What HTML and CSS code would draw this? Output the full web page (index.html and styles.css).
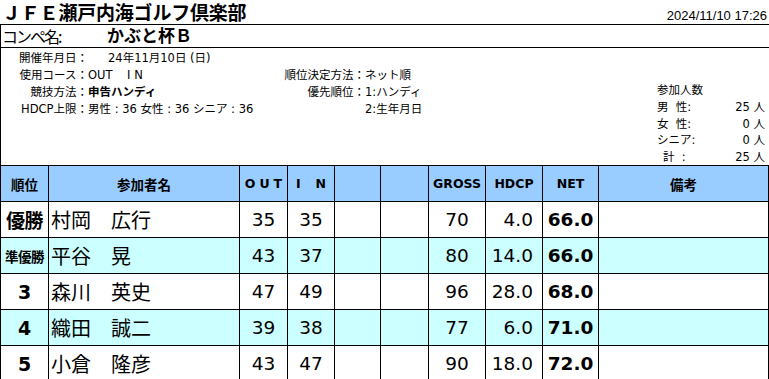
FILE: index.html
```html
<!DOCTYPE html>
<html lang="ja">
<head>
<meta charset="utf-8">
<title>ＪＦＥ瀬戸内海ゴルフ倶楽部 成績表</title>
<link rel="stylesheet" href="styles.css">
</head>
<body>
<div class="page">
  <header class="title-row">
    <h1 class="club">ＪＦＥ瀬戸内海ゴルフ倶楽部</h1>
    <span class="stamp">2024/11/10 17:26</span>
  </header>
  <div class="sheet">
    <div class="comp-row">
      <span class="comp-label">コンペ名:</span>
      <span class="comp-name">かぶと杯Ｂ</span>
    </div>
    <div class="info">
      <div class="info-left">
        <div class="kv"><span class="k">開催年月日：</span><span class="v date">24年11月10日 (日)</span></div>
        <div class="kv"><span class="k">使用コース：</span><span class="v">OUT&nbsp;&nbsp;&nbsp;&nbsp;I N</span></div>
        <div class="kv"><span class="k">競技方法：</span><span class="v strong">申告ハンディ</span></div>
        <div class="kv"><span class="k">HDCP上限：</span><span class="v">男性 : 36 女性 : 36 シニア : 36</span></div>
      </div>
      <div class="info-mid">
        <div class="kv"><span class="k">順位決定方法：</span><span class="v">ネット順</span></div>
        <div class="kv"><span class="k">優先順位：</span><span class="v">1:ハンディ</span></div>
        <div class="kv"><span class="k"></span><span class="v">2:生年月日</span></div>
      </div>
      <div class="info-right">
        <div class="cnt-title">参加人数</div>
        <div class="cnt"><span>男&nbsp;&nbsp;性:</span><span class="n">25 人</span></div>
        <div class="cnt"><span>女&nbsp;&nbsp;性:</span><span class="n">0 人</span></div>
        <div class="cnt"><span>シニア:</span><span class="n">0 人</span></div>
        <div class="cnt"><span class="total">計&nbsp;&nbsp;:</span><span class="n">25 人</span></div>
      </div>
    </div>
    <table class="results">
      <colgroup>
        <col class="c-rank"><col class="c-name"><col class="c-out"><col class="c-in"><col class="c-x1"><col class="c-x2"><col class="c-gross"><col class="c-hdcp"><col class="c-net"><col class="c-note">
      </colgroup>
      <thead>
        <tr>
          <th class="jp">順位</th>
          <th class="jp">参加者名</th>
          <th class="out">OUT</th>
          <th class="in">I<span class="gap"></span>N</th>
          <th></th>
          <th></th>
          <th>GROSS</th>
          <th>HDCP</th>
          <th>NET</th>
          <th class="jp">備考</th>
        </tr>
      </thead>
      <tbody>
        <tr>
          <td class="rank win">優勝</td><td class="name">村岡　広行</td><td class="num">35</td><td class="num">35</td><td></td><td></td><td class="num">70</td><td class="hdcp">4.0</td><td class="net">66.0</td><td></td>
        </tr>
        <tr class="alt">
          <td class="rank runner">準優勝</td><td class="name">平谷　晃</td><td class="num">43</td><td class="num">37</td><td></td><td></td><td class="num">80</td><td class="hdcp">14.0</td><td class="net">66.0</td><td></td>
        </tr>
        <tr>
          <td class="rank digit">3</td><td class="name">森川　英史</td><td class="num">47</td><td class="num">49</td><td></td><td></td><td class="num">96</td><td class="hdcp">28.0</td><td class="net">68.0</td><td></td>
        </tr>
        <tr class="alt">
          <td class="rank digit">4</td><td class="name">織田　誠二</td><td class="num">39</td><td class="num">38</td><td></td><td></td><td class="num">77</td><td class="hdcp">6.0</td><td class="net">71.0</td><td></td>
        </tr>
        <tr>
          <td class="rank digit">5</td><td class="name">小倉　隆彦</td><td class="num">43</td><td class="num">47</td><td></td><td></td><td class="num">90</td><td class="hdcp">18.0</td><td class="net">72.0</td><td></td>
        </tr>
      </tbody>
    </table>
  </div>
</div>
</body>
</html>
```
FILE: styles.css
```css
* { box-sizing: border-box; }
html, body { margin: 0; padding: 0; background: #fff; }
body {
  font-family: "DejaVu Sans", "Noto Sans CJK JP", sans-serif;
  color: #000;
  width: 769px;
  overflow: hidden;
}
.page { width: 769px; }

.title-row {
  height: 24px;
  display: flex;
  align-items: flex-end;
  justify-content: space-between;
}
.club {
  margin: 0;
  padding-left: 2px;
  font-family: "Noto Sans CJK JP", sans-serif;
  font-size: 19px;
  font-weight: 700;
  line-height: 24px;
  letter-spacing: -0.2px;
}
.stamp {
  font-family: "Liberation Sans", sans-serif;
  font-size: 13px;
  line-height: 14px;
  padding-right: 2px;
  padding-bottom: 1px;
}

.sheet {
  border-top: 1px solid #000;
  border-left: 1px solid #000;
}
.comp-row {
  height: 23px;
  border-bottom: 1px solid #000;
  display: flex;
  align-items: center;
}
.comp-label {
  font-family: "Noto Sans CJK JP", sans-serif;
  font-size: 16px;
  line-height: 22px;
  letter-spacing: -2px;
  padding-left: 1px;
  width: 106px;
}
.comp-name {
  font-family: "DejaVu Sans", "Noto Sans CJK JP", sans-serif;
  font-size: 17px;
  font-weight: 700;
  line-height: 22px;
}

.info {
  height: 117px;
  display: flex;
  font-size: 11.5px;
  padding-top: 2px;
}
.kv {
  display: grid;
  line-height: 17px;
  white-space: nowrap;
}
.info-left { width: 262px; }
.info-left .kv { grid-template-columns: 87px auto; }
.info-mid { width: 394px; padding-top: 17px; }
.info-mid .kv { grid-template-columns: 102px auto; }
.k { text-align: right; }
.v.date { padding-left: 20px; }
.v.strong { font-weight: 700; }

.info-right {
  width: 108px;
  padding-top: 32px;
  line-height: 16.8px;
}
.cnt-title { line-height: 16.8px; }
.cnt {
  display: flex;
  justify-content: space-between;
  line-height: 16.8px;
}
.cnt .total { padding-left: 6px; }

.results {
  width: 768px;
  table-layout: fixed;
  border-collapse: separate;
  border-spacing: 0;
  border-top: 1px solid #000;
}
.c-rank { width: 48px; }
.c-name { width: 191px; }
.c-out { width: 48px; }
.c-in { width: 47px; }
.c-x1 { width: 46px; }
.c-x2 { width: 48px; }
.c-gross { width: 57px; }
.c-hdcp { width: 57px; }
.c-net { width: 56px; }
.c-note { width: 170px; }

.results th, .results td {
  padding: 0;
  border-right: 1px solid #000;
  border-bottom: 1px solid #000;
  height: 36px;
  white-space: nowrap;
  overflow: hidden;
}
.results th {
  background: #99ccff;
  font-size: 12.5px;
  font-weight: 700;
  text-align: center;
  height: 36px;
}
.results th.jp {
  font-family: "Noto Sans CJK JP", sans-serif;
  font-size: 13.5px;
}
.results th.out { letter-spacing: 4px; padding-left: 4px; }
.results th.in .gap { display: inline-block; width: 15px; }

.results tr.alt td { background: #ccffff; }

.rank {
  text-align: center;
  font-weight: 700;
}
.rank.win {
  font-family: "Noto Sans CJK JP", sans-serif;
  font-size: 19px;
  letter-spacing: -0.5px;
}
.rank.runner {
  font-family: "Noto Sans CJK JP", sans-serif;
  font-size: 13.5px;
  letter-spacing: -0.5px;
}
.rank.digit { font-size: 19px; }

.name {
  font-family: "Noto Sans CJK JP", sans-serif;
  font-size: 20px;
  padding-left: 2px !important;
}
.num {
  font-size: 18.5px;
  text-align: center;
}
.hdcp {
  font-size: 18.5px;
  text-align: right;
  padding-right: 9px !important;
}
.net {
  font-size: 18.5px;
  font-weight: 700;
  text-align: center;
}
```
